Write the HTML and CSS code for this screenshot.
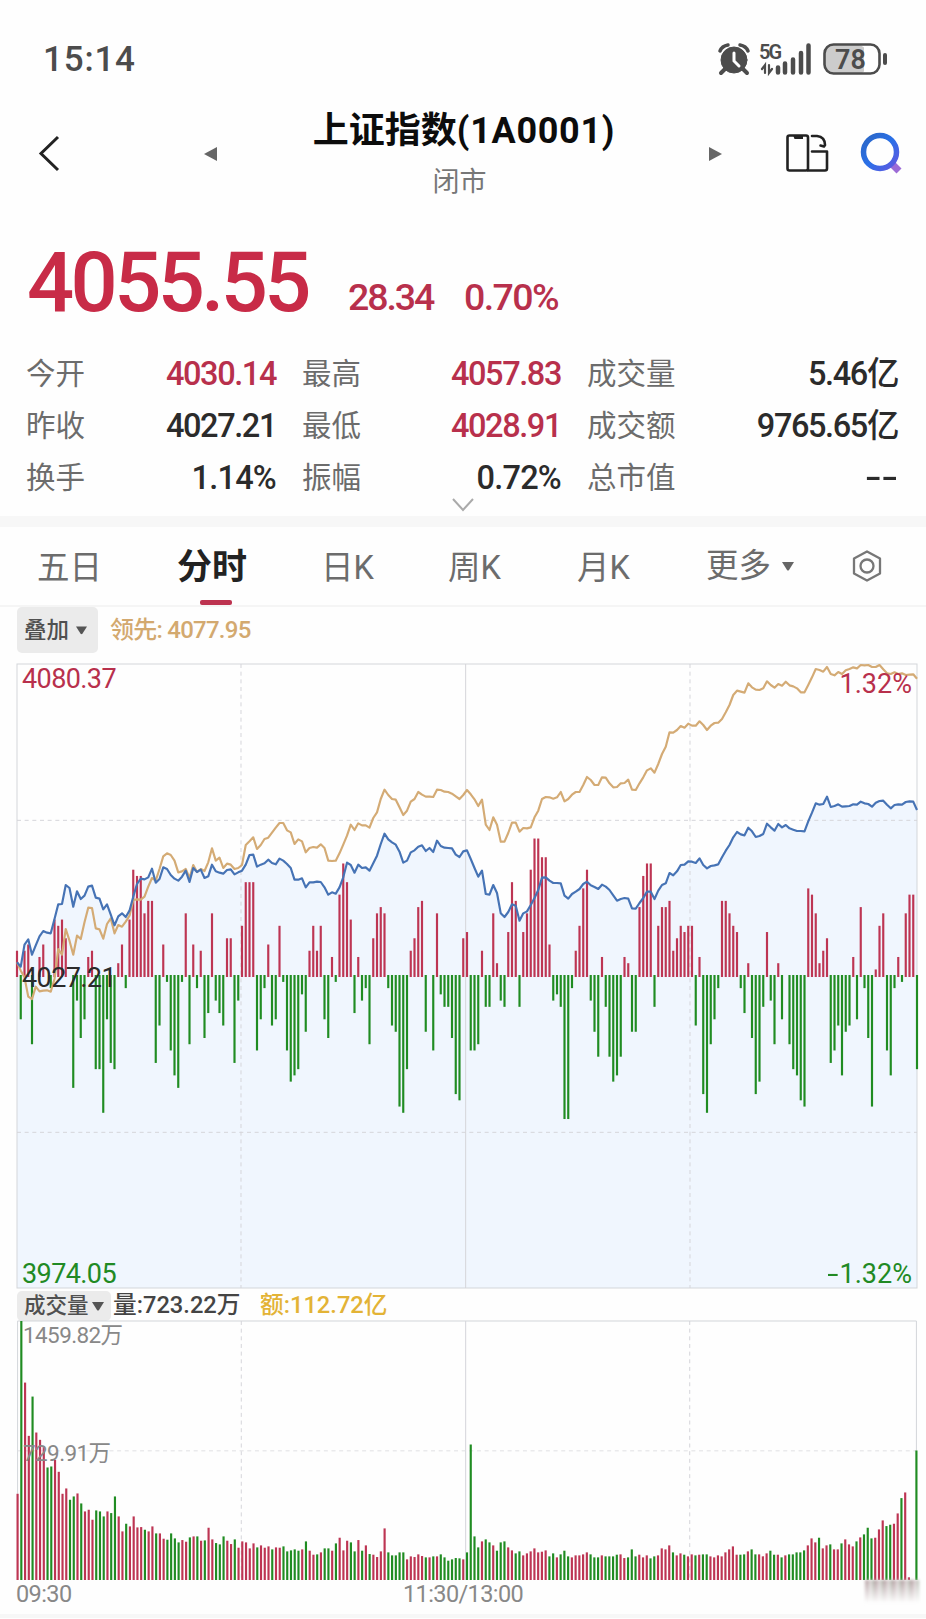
FILE: index.html
```
<!DOCTYPE html>
<html lang="zh-CN">
<head>
    <meta charset="UTF-8">
    <title>上证指数(1A0001)</title>
    <link rel="stylesheet" href="styles.css">
</head>
<body>
<div class="status">
    <span class="time">15:14</span>
    <svg class="status-icons" width="170" height="34" viewBox="0 0 170 34">
        <g fill="#4c4c4c" stroke="#4c4c4c" stroke-linecap="round">
            <circle cx="10" cy="18" r="13"/>
            <path d="M-4 9Q-2 4 4 3M24 9Q22 4 16 3" fill="none" stroke-width="3.5"/>
            <path d="M1 27l-4 4M19 27l4 4" stroke-width="4"/>
            <path d="M10 11v8l5 5" fill="none" stroke="#fff" stroke-width="3"/>
            <path d="M54 30.500v-5M61 30.500v-9M69 30.500v-13M77 30.500v-19.500M84.500 30.500v-27" stroke-width="4.500"/>
            <path d="M41 31v-8l-3 4M45 23v8l3-4" fill="none" stroke-width="2.200"/>
        </g>
        <rect x="101" y="3" width="41" height="29" rx="8" fill="#ccc"/>
        <path d="M140 2.500h3v30h-3z" fill="#fff"/>
        <rect x="100.500" y="2.500" width="55" height="29" rx="9" fill="none" stroke="#4c4c4c" stroke-width="2.600"/>
        <rect x="159" y="11" width="4" height="12" rx="2" fill="#4c4c4c"/>
    </svg>
    <span class="net">5G</span>
    <span class="battery">78</span>
</div>

<div class="header">
    <svg class="back" width="24" height="38" viewBox="0 0 24 38"><path d="M20 2L3 18.500 20 35" fill="none" stroke="#222" stroke-width="3"/></svg>
    <svg class="prev" width="13" height="14" viewBox="0 0 13 14"><path d="M13 0v14L0 7z" fill="#666"/></svg>
    <div class="title">
        <h1>上证指数<span>(1A0001)</span></h1>
        <p>闭市</p>
    </div>
    <svg class="next" width="13" height="14" viewBox="0 0 13 14"><path d="M0 0v14l13-7z" fill="#666"/></svg>
    <svg class="rotate" width="43" height="38" viewBox="0 0 43 38">
        <g fill="none" stroke="#222" stroke-width="2.600" stroke-linejoin="round" stroke-linecap="round">
            <rect x="1.500" y="1.500" width="20.500" height="35" rx="2"/>
            <path d="M22 36.500h17q2 0 2-2V17.500H26M26 2h5q8 1 8 9l-1 1.500-3.500-1"/>
        </g>
        <path d="M7 1h10v4H8.500z" fill="#222"/>
    </svg>
    <svg class="search" width="44" height="44" viewBox="0 0 44 44">
        <defs>
            <linearGradient id="lens" x1="0" y1="0" x2="1" y2="1">
                <stop offset="0" stop-color="#2b66c4"/>
                <stop offset=".5" stop-color="#2a70e8"/>
                <stop offset="1" stop-color="#6257e0"/>
            </linearGradient>
        </defs>
        <path d="M32 33l7 7" stroke="#9c6bd6" stroke-width="7"/>
        <circle cx="20" cy="21" r="16.500" fill="none" stroke="url(#lens)" stroke-width="5.500"/>
    </svg>
</div>

<div class="quote">
    <span class="price">4055.55</span>
    <span class="change">28.34</span>
    <span class="percent">0.70%</span>
</div>

<div class="stats">
    <div class="stat"><span>今开</span><b class="up">4030.14</b></div>
    <div class="stat"><span>最高</span><b class="up">4057.83</b></div>
    <div class="stat"><span>成交量</span><b>5.46亿</b></div>
    <div class="stat"><span>昨收</span><b>4027.21</b></div>
    <div class="stat"><span>最低</span><b class="up">4028.91</b></div>
    <div class="stat"><span>成交额</span><b>9765.65亿</b></div>
    <div class="stat"><span>换手</span><b class="ratio">1.14%</b></div>
    <div class="stat"><span>振幅</span><b class="ratio">0.72%</b></div>
    <div class="stat"><span>总市值</span><b class="none">--</b></div>
</div>
<div class="expand">
    <svg width="24" height="14" viewBox="0 0 24 14"><path d="M2 1l10 11L22 1" fill="none" stroke="#aaa" stroke-width="2"/></svg>
</div>

<div class="tabs">
    <span>五日</span>
    <span class="active">分时</span>
    <span>日K</span>
    <span>周K</span>
    <span>月K</span>
    <span class="more">更多<svg width="12" height="9" viewBox="0 0 12 9"><path d="M0 0h12L7 8q-1 1-2 0z" fill="#666"/></svg></span>
    <svg class="settings" width="30" height="32" viewBox="0 0 30 32">
        <g fill="none" stroke="#777" stroke-width="2.300" stroke-linejoin="round">
            <path d="M15 1.500l13 7v15l-13 7-13-7v-15z"/>
            <circle cx="15" cy="16" r="6.500"/>
        </g>
    </svg>
</div>

<div class="overlay-bar">
    <span class="chip">叠加<svg width="11" height="9" viewBox="0 0 12 9"><path d="M0 0h12L7 8q-1 1-2 0z" fill="#555"/></svg></span>
    <span class="leading">领先: 4077.95</span>
</div>

<div class="chart price-chart">
    <svg id="price" width="900" height="624" viewBox="0 0 2700 1872"></svg>
    <span class="label top-left up">4080.37</span>
    <span class="label top-right up">1.32%</span>
    <span class="label middle">4027.21</span>
    <span class="label bottom-left down">3974.05</span>
    <span class="label bottom-right down"><span class="minus">-</span>1.32%</span>
</div>

<div class="volume-bar">
    <span class="chip">成交量<svg width="12" height="9" viewBox="0 0 12 9"><path d="M0 0h12L7 8q-1 1-2 0z" fill="#555"/></svg></span>
    <span class="amount">量:723.22万</span>
    <span class="turnover">额:112.72亿</span>
</div>

<div class="chart volume-chart">
    <svg id="volume" width="900" height="259" viewBox="0 0 2700 778"></svg>
    <span class="label vol-max">1459.82万</span>
    <span class="label vol-mid">729.91万</span>
    <i class="smudge"></i>
</div>

<div class="axis">
    <span>09:30</span>
    <span>11:30/13:00</span>
</div>
<div class="footer"></div>
<script src="chart.js"></script>
</body>
</html>
```
FILE: styles.css
```
* {
    box-sizing: border-box;
}

body {
    margin: 0;
    width: 926px;
    height: 1619px;
    overflow: hidden;
    background: #fefefe;
    color: #2b2b2b;
    font-family: Roboto, "Noto Sans CJK SC", sans-serif;
    white-space: nowrap;
}

svg {
    display: block;
    flex: none;
}

.up {
    color: #b8304c;
}

.down {
    color: #218a24;
}

.status {
    position: relative;
    display: flex;
    justify-content: space-between;
    height: 104px;
    padding: 42px 32px 0 43px;
}

.time {
    color: #4c4c4c;
    font-size: 35px;
    font-weight: 500;
    line-height: 36px;
    letter-spacing: 0.8px;
}

.status-icons {
    width: 170px;
    overflow: visible;
}

.net,
.battery {
    position: absolute;
    color: #4c4c4c;
    font-weight: 600;
}

.net {
    left: 759px;
    top: 39px;
    font-size: 20px;
    line-height: 26px;
    letter-spacing: -2px;
}

.battery {
    left: 835px;
    top: 43px;
    font-size: 27px;
    line-height: 34px;
}

.header {
    display: flex;
    height: 112px;
    padding-left: 38px;
}

.back {
    margin-top: 31px;
}

.prev {
    margin: 43px 0 0 142px;
}

.title {
    width: 492px;
    text-align: center;
}

.title h1 {
    margin: 4px 0 0;
    padding-left: 2px;
    color: #0c0c0c;
    font-size: 36px;
    font-weight: 700;
    line-height: 46px;
}

.title h1 span {
    letter-spacing: 0.7px;
}

.title p {
    margin: 8px 0 0;
    padding-right: 7px;
    color: #777;
    font-size: 27px;
    line-height: 40px;
}

.next {
    margin-top: 43px;
}

.rotate {
    margin: 30px 0 0 64px;
}

.search {
    margin: 27px 0 0 31px;
}

.quote {
    display: flex;
    align-items: baseline;
    height: 130px;
    padding: 18px 0 0 27px;
    color: #b8304c;
}

.price {
    width: 321px;
    color: #c82b47;
    font-size: 83px;
    font-weight: 500;
    line-height: 98px;
    letter-spacing: -3.6px;
}

.change,
.percent {
    position: relative;
    top: -1px;
    width: 116px;
    font-size: 37.5px;
    font-weight: 500;
    letter-spacing: -2.1px;
}

.percent {
    letter-spacing: -1.6px;
}

.stats {
    display: grid;
    grid-template-columns: 250px 259px 311px;
    grid-auto-rows: 52px;
    column-gap: 26px;
    padding: 2px 27px 0 26px;
}

.stat {
    display: flex;
    justify-content: space-between;
    align-items: center;
    color: #6c6c6c;
    font-size: 29.5px;
    line-height: 52px;
}

.stat b {
    margin-top: -1px;
    color: #2b2b2b;
    font-size: 32.5px;
    font-weight: 500;
    letter-spacing: -1.4px;
}

.stat b.up {
    color: #b8304c;
}

.stat b.ratio {
    letter-spacing: -0.8px;
}

.stat b.none {
    letter-spacing: 0;
    transform: scaleX(1.5);
    transform-origin: right;
}

.expand {
    display: flex;
    justify-content: center;
    height: 14px;
    margin-top: -6px;
}

.tabs {
    display: flex;
    height: 91px;
    padding-left: 37px;
    border-top: 11px solid #f7f7f7;
    border-bottom: 2px solid #f5f5f5;
    margin-top: 4px;
    color: #6c6c6c;
    font-size: 32.5px;
    line-height: 82px;
}

.tabs span {
    width: 129px;
}

.tabs span:first-child {
    width: 140px;
}

.tabs .active {
    position: relative;
    width: 144px;
    color: #222;
    font-size: 35px;
    font-weight: 700;
}

.active::after {
    content: "";
    position: absolute;
    left: 23px;
    bottom: 0;
    width: 32px;
    height: 5px;
    border-radius: 2px;
    background: #bd3350;
}

.tabs .more {
    display: flex;
    align-items: center;
    gap: 11px;
    width: 143px;
}

.settings {
    margin: 23px 0 0 3px;
}

.tabs span:nth-child(3) {
    width: 127px;
}

.overlay-bar {
    display: flex;
    gap: 12px;
    height: 57px;
    padding-left: 17px;
    font-size: 22.5px;
    line-height: 46px;
}

.chip {
    display: flex;
    align-items: center;
    gap: 7px;
    width: 81px;
    height: 46px;
    padding-left: 7px;
    border-radius: 5px;
    background: #ebebeb;
    color: #505050;
    font-weight: 500;
}

.leading {
    color: #d3a96f;
    font-weight: 500;
    font-size: 24px;
    letter-spacing: -0.75px;
}

.chart {
    position: relative;
    padding-left: 17.3px;
}

.price-chart {
    height: 624px;
}

.chart svg {
    overflow: visible;
}

.label {
    position: absolute;
    left: 22px;
    font-size: 27px;
    line-height: 30px;
    letter-spacing: -0.6px;
}

.top-left {
    top: 0;
}

.top-right {
    top: 5px;
    left: auto;
    right: 14px;
    letter-spacing: 0;
}

.middle {
    top: 299px;
}

.bottom-left {
    bottom: -1px;
}

.bottom-right {
    bottom: -1px;
    left: auto;
    right: 14px;
    letter-spacing: 0;
}

.minus {
    display: inline-block;
    margin-right: 1px;
    transform: scaleX(1.5);
    transform-origin: right;
}

.volume-bar {
    display: flex;
    height: 33px;
    padding-left: 17px;
    font-size: 23.7px;
    font-weight: 500;
    line-height: 34px;
}

.volume-bar .chip {
    gap: 3px;
    width: 94px;
    height: 30px;
    margin-top: 3px;
    font-size: 21.5px;
}

.amount {
    width: 147px;
    padding-left: 2px;
    color: #444;
}

.turnover {
    padding-left: 2px;
    color: #e3b336;
}

.volume-chart {
    height: 259px;
}

.vol-max,
.vol-mid {
    top: 0;
    left: 23px;
    color: #888;
    font-size: 22.5px;
    line-height: 28px;
}

.vol-mid {
    top: 118px;
}

.smudge {
    position: absolute;
    left: 865px;
    top: 259px;
    width: 54px;
    height: 23px;
    background: linear-gradient(rgba(254, 254, 254, 0), #fefefe), repeating-linear-gradient(90deg, #b9a5a8 0 3px, #d8d0d0 4px 7px, #a9b5a6 8px 9px);
    filter: blur(1.5px);
}

.axis {
    display: flex;
    height: 34px;
    padding-left: 16px;
    color: #888;
    font-size: 23.5px;
    line-height: 28px;
    letter-spacing: -0.6px;
}

.axis span {
    width: 387px;
}

.footer {
    height: 4px;
    background: #f7f7f7;
}
```
FILE: chart.js
```
const RED = '#bd3553';
const GREEN = '#208c22';
const STEP = 11.25; // one minute, 241 points per session
const UNIT = 18.7;

const index = [
    895, 908, 842, 826, 872, 844, 817, 801, 806, 808, 765, 721, 720, 663, 672, 728, 682, 705, 695, 668,
    665, 701, 704, 736, 721, 752, 784, 757, 748, 759, 740, 698, 660, 644, 646, 640, 614, 656, 645, 610,
    615, 633, 644, 650, 638, 620, 654, 612, 624, 617, 642, 637, 602, 622, 626, 629, 618, 616, 631, 625,
    620, 602, 573, 572, 608, 602, 598, 587, 597, 601, 584, 590, 600, 612, 647, 647, 643, 670, 655, 655,
    653, 654, 670, 692, 685, 689, 670, 640, 596, 603, 626, 602, 612, 610, 620, 598, 575, 540, 509, 526,
    535, 542, 563, 596, 590, 565, 559, 548, 544, 561, 552, 564, 530, 546, 551, 552, 553, 572, 579, 562,
    559, 585, 612, 638, 620, 690, 692, 663, 687, 748, 759, 744, 721, 725, 770, 748, 742, 723, 702, 678,
    641, 640, 650, 657, 657, 658, 695, 704, 690, 683, 675, 660, 653, 664, 669, 675, 662, 668, 678, 694,
    710, 705, 702, 704, 733, 734, 717, 702, 683, 683, 705, 680, 663, 658, 627, 634, 622, 603, 602, 592,
    593, 597, 583, 603, 613, 606, 604, 601, 580, 560, 543, 520, 504, 511, 514, 491, 502, 519, 516, 510,
    479, 490, 500, 480, 490, 483, 493, 497, 501, 501, 502, 472, 446, 418, 422, 420, 398, 429, 426, 421,
    428, 427, 426, 421, 422, 413, 418, 420, 428, 416, 411, 410, 422, 433, 423, 421, 422, 414, 412, 413, 438
];

const leading = [
    895, 920, 940, 998, 1005, 968, 982, 980, 979, 983, 945, 855, 872, 795, 830, 872, 815, 825, 775, 731,
    732, 793, 796, 824, 780, 763, 808, 783, 788, 773, 755, 708, 706, 707, 698, 668, 642, 650, 615, 577,
    568, 573, 590, 625, 622, 615, 642, 603, 624, 615, 621, 595, 553, 590, 581, 612, 599, 602, 615, 612,
    603, 543, 532, 520, 555, 543, 525, 521, 506, 491, 477, 477, 499, 505, 540, 526, 532, 565, 552, 549,
    551, 541, 552, 590, 591, 590, 568, 542, 515, 482, 498, 478, 484, 484, 491, 462, 445, 405, 377, 393,
    405, 407, 430, 453, 440, 413, 405, 384, 392, 398, 398, 399, 377, 378, 383, 384, 389, 397, 405, 393,
    378, 391, 406, 426, 407, 482, 498, 460, 482, 533, 533, 507, 476, 476, 503, 492, 493, 490, 460, 440,
    405, 399, 400, 404, 400, 384, 412, 405, 392, 384, 384, 363, 339, 348, 363, 363, 340, 341, 358, 370,
    369, 358, 357, 347, 377, 378, 358, 340, 319, 313, 326, 300, 270, 248, 205, 206, 198, 186, 191, 179,
    185, 185, 172, 183, 198, 185, 177, 176, 165, 145, 123, 93, 80, 83, 86, 58, 70, 77, 78, 73,
    52, 63, 71, 60, 65, 53, 64, 67, 73, 85, 85, 63, 40, 15, 18, 23, 9, 30, 34, 24,
    30, 19, 15, 10, 13, 3, 4, 3, 9, 9, 3, 16, 28, 30, 25, 30, 28, 33, 32, 31, 44
];

const momentum = [
    4, -7, 4, 5, -11, 0, 3, 5, 0, -2, 9, 8, 9, 6, 0, -18, -4, -10, -7, 3,
    4, -15, -15, -22, -7, -14, -15, 2, 5, -2, 9, 17, 16, 16, 10, 12, 12, -14, -8, 5,
    -1, -12, -16, -18, -1, 10, -11, 5, -2, 4, -10, -6, 10, -4, -6, -8, 6, 6, -14, -4,
    8, 15, 15, 15, -12, -7, -2, 5, -8, -7, 8, -1, -12, -17, -16, -15, -3, -9, 4, 8,
    4, 8, -7, -10, 3, -1, 13, 18, 15, 9, -6, 3, -4, -2, -11, 6, 10, 11, 10, -2,
    -8, -9, -21, -22, -15, 4, 6, 11, 12, -9, 0, -12, 10, -3, -5, -5, -10, -19, -20, 6,
    7, -12, -12, -11, 4, -5, -5, 10, 2, -4, -5, 7, 15, 12, -5, 7, 10, 17, 22, 22,
    19, 19, 5, -4, -3, -5, -23, -23, -2, 4, 8, 14, 17, -4, -9, -13, 3, -5, -13, -17,
    -16, -13, 3, 2, -9, -9, 11, 16, 18, 18, -5, 8, 11, 11, 12, 4, 6, 8, 7, 8,
    8, -8, 3, -19, -22, -11, -7, -2, 12, 12, 10, 8, 7, -2, -6, 2, -10, -19, -17, -5,
    7, -4, -11, 2, -7, 0, -11, -15, -16, -20, -21, 14, 13, 10, 2, 4, 6, -14, -12, -8,
    -16, -9, -8, 3, -7, 11, -2, -10, -21, 1, 8, 10, -12, -16, -2, 3, -1, 10, 13, 13, -15
];

// negative: the minute closed lower
const volumes = [
    259, -778, 593, 433, -551, 443, 421, 401, -338, -341, 361, 325, 259, 275, -241, -251, 260, -230, 206, 211,
    181, -209, -206, -191, 206, -201, -251, 191, 146, -169, 161, 191, 158, 159, -151, 146, 161, -140, 140, 124,
    -121, -140, -125, -113, 120, 115, -128, 131, -131, 118, -119, 157, 122, -111, -107, -131, 118, 108, -122, 97,
    116, 113, 95, 110, -98, 104, 97, 101, -92, 98, 97, -101, -86, -89, -92, -88, 92, -116, 88, 76,
    -77, 83, -95, -95, 88, -110, 127, 89, 118, -113, -86, 120, -88, 104, -78, 76, 69, 86, 155, -83,
    -74, -74, -83, -83, 62, 71, 69, 77, 72, -68, 68, -71, 71, -77, -68, -58, -62, -66, -65, 62,
    -83, -407, -131, -98, 116, -122, -113, 104, -88, -113, -116, 98, 89, -80, -86, 74, 80, 86, 95, 83,
    85, 89, -71, -80, 68, -77, -88, -71, 68, 74, 74, 77, 83, -77, -68, -68, 74, -71, -71, -71,
    -76, 77, 66, -68, -92, -71, 76, 68, 74, -65, -71, 74, 95, 92, 104, -83, 74, 80, -76, 71,
    77, -74, 76, -77, -77, 71, 68, 74, 71, 83, 92, 101, 76, -76, -77, 86, -92, -77, 77, 71,
    80, -88, -76, 76, -68, 74, -77, -77, -83, -83, -89, 104, 125, 113, -127, 95, 104, -107, 92, 92,
    -110, 122, 107, 101, -116, 128, -137, -157, -125, 127, 152, 179, -162, -166, 169, 200, -246, 263, 8, 0, -389
];

function line(x1, y1, x2, y2, color, dash) {
    return `<path d="M${x1} ${y1}L${x2} ${y2}" stroke="${color}" stroke-width="3" ${dash ? 'stroke-dasharray="12 11"' : ''}/>`;
}

function frame(height) {
    return `<rect width="2700" height="${height}" fill="none" stroke="#d3d6da" stroke-width="3"/>`;
}

function grid(height) {
    return line(672, 0, 672, height, '#d5d5da', true)
        + line(1346, 0, 1346, height, '#d5d5da')
        + line(2019, 0, 2019, height, '#d5d5da', true);
}

function bar(i, from, to, color) {
    return `<path d="M${i * STEP} ${from}V${to}" stroke="${color}" stroke-width="6.5"/>`;
}

function points(values) {
    return values.map((y, i) => `${i * STEP},${y}`).join(' ');
}

const base = 935;
document.getElementById('price').innerHTML =
    `<polygon points="0,1872 ${points(index)} 2700,1872" fill="#f0f6fe"/>`
    + frame(1872) + grid(1872)
    + line(0, 469, 2700, 469, '#d5d5da', true)
    + line(0, 1405, 2700, 1405, '#d5d5da', true)
    + momentum.map((v, i) => v ? bar(i, v > 0 ? base + 4 : base - 2, base - v * UNIT, v > 0 ? RED : GREEN) : '').join('')
    + `<polyline points="${points(leading)}" fill="none" stroke="#d4ab75" stroke-width="6.5" stroke-linejoin="round"/>`
    + `<polyline points="${points(index)}" fill="none" stroke="#4673b5" stroke-width="6.5" stroke-linejoin="round"/>`;

document.getElementById('volume').innerHTML =
    line(0, 0, 2700, 0, '#d3d6da') + line(2700, 0, 2700, 778, '#d3d6da') + line(0, 0, 0, 778, '#d3d6da')
    + grid(778)
    + line(0, 390, 2700, 390, '#e0e0e3', true)
    + volumes.map((v, i) => v ? bar(i, 778, 778 - Math.abs(v), v > 0 ? RED : GREEN) : '').join('');
```
